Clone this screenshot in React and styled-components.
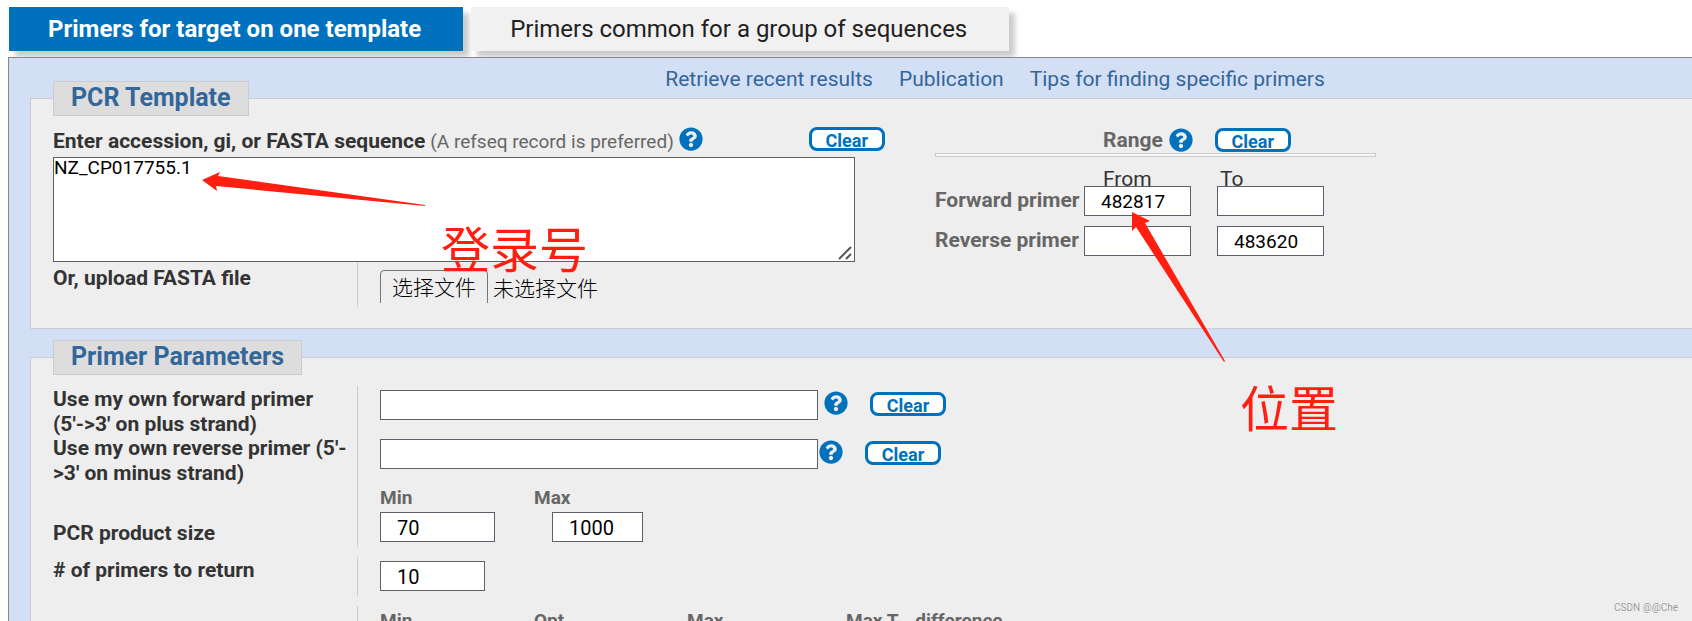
import React from 'react';
import styled, { createGlobalStyle, css } from 'styled-components';

const GlobalStyle = createGlobalStyle`
  * {
    box-sizing: border-box;
  }

  body {
    margin: 0;
    background: #fff;
    color: #333;
    font-family: Roboto, 'Noto Sans CJK SC', sans-serif;
    font-size: 21px;
    line-height: 25px;
  }
`;

const HelpIcon = () => (
  <svg width="24" height="24" viewBox="0 0 512 512" aria-hidden="true">
    <path
      fill="#0071bc"
      d="M504 256c0 137-111 248-248 248S8 393 8 256 119 8 256 8s248 111 248 248z"
    />
    <path
      fill="#eee"
      d="M262.7 90c-54.5 0-89.300 23-116.500 63.800-3.500 5.300-2.400 12.400 2.700 16.300l34.700 26.300c5.200 3.900 12.600 3 16.700-2.100 17.900-22.700 30.100-35.800 57.300-35.800 20.400 0 45.700 13.100 45.700 33 0 15-12.400 22.700-32.500 34C247.100 238.500 216 254.900 216 296v4c0 6.600 5.400 12 12 12h56c6.600 0 12-5.400 12-12v-1.300c0-28.500 83.200-29.600 83.200-106.700 0-58-60.200-102-116.500-102zM256 338c-25.400 0-46 20.600-46 46s20.600 46 46 46 46-20.600 46-46-20.600-46-46-46z"
    />
  </svg>
);

const Help = () => (
  <HelpButton type="button" aria-label="Help">
    <HelpIcon />
  </HelpButton>
);

// label column, divider, then the controls
const ParamRow = ({ label, htmlFor, rowHeight, labelTop, children }) => (
  <Row $height={rowHeight}>
    <RowLabel htmlFor={htmlFor} $top={labelTop}>{label}</RowLabel>
    <RowBody>{children}</RowBody>
  </Row>
);

const App = () => {
  return (
    <Page>
      <GlobalStyle />
      <Tabs>
        <Tab href="#one" $active>Primers for target on one template</Tab>
        <Tab href="#group">Primers common for a group of sequences</Tab>
      </Tabs>

      <Panel>
        <TopLinks>
          <a href="#recent">Retrieve recent results</a>
          <a href="#publication">Publication</a>
          <a href="#tips">Tips for finding specific primers</a>
        </TopLinks>

        <Section>
          <SectionTitle>PCR Template</SectionTitle>
          <TemplateGrid>
            <div>
              <SequenceHead>
                <label htmlFor="seq">Enter accession, gi, or FASTA sequence</label>
                <Hint>(A refseq record is preferred)</Hint>
                <Help />
                <ClearButton type="button">Clear</ClearButton>
              </SequenceHead>
              <SequenceBox>
                <textarea id="seq" defaultValue="NZ_CP017755.1" />
                <Grip width="14" height="14" viewBox="0 0 14 14" aria-hidden="true">
                  <path d="M1 13 13 1M8 13l5-5" />
                </Grip>
              </SequenceBox>
              <UploadRow>
                <UploadLabel htmlFor="upload">Or, upload FASTA file</UploadLabel>
                <UploadBody>
                  <FilePicker>
                    <input id="upload" type="file" />
                    <span>选择文件</span>
                    未选择文件
                  </FilePicker>
                </UploadBody>
              </UploadRow>
            </div>

            <Range>
              <RangeHead>
                <span>Range</span>
                <Help />
                <ClearButton type="button">Clear</ClearButton>
              </RangeHead>
              <RangeRule />
              <RangeCaptions>
                <span>From</span>
                <span>To</span>
              </RangeCaptions>
              <RangeRow>
                <span>Forward primer</span>
                <RangeInput aria-label="Forward primer from" defaultValue="482817" />
                <RangeInput aria-label="Forward primer to" />
              </RangeRow>
              <RangeRow>
                <span>Reverse primer</span>
                <RangeInput aria-label="Reverse primer from" />
                <RangeInput aria-label="Reverse primer to" defaultValue="483620" />
              </RangeRow>
            </Range>
          </TemplateGrid>
        </Section>

        <Section>
          <SectionTitle>Primer Parameters</SectionTitle>
          <Params>
            <ParamRow
              label={<>Use my own forward primer<br />(5'-&gt;3' on plus strand)</>}
              htmlFor="left"
              rowHeight={39}
            >
              <Controls $gap={6}>
                <TextInput id="left" $width={438} />
                <Help />
                <ClearButton type="button">Clear</ClearButton>
              </Controls>
            </ParamRow>
            <ParamRow
              label={<>Use my own reverse primer (5'-<br />&gt;3' on minus strand)</>}
              htmlFor="right"
              rowHeight={38}
            >
              <Controls $gap={1}>
                <TextInput id="right" $width={438} />
                <Help />
                <ClearButton type="button">Clear</ClearButton>
              </Controls>
            </ParamRow>
            <ParamRow label="PCR product size" htmlFor="sizeMin" rowHeight={64} labelTop={38}>
              <Captions>
                <label htmlFor="sizeMin">Min</label>
                <label htmlFor="sizeMax">Max</label>
              </Captions>
              <Sizes>
                <TextInput id="sizeMin" $width={115} defaultValue="70" />
                <TextInput id="sizeMax" $width={91} defaultValue="1000" />
              </Sizes>
            </ParamRow>
            <ParamRow label="# of primers to return" htmlFor="num" rowHeight={39}>
              <Controls>
                <TextInput id="num" $width={105} defaultValue="10" />
              </Controls>
            </ParamRow>
            <ParamRow label="" rowHeight={64}>
              <Captions>
                <span>Min</span>
                <span>Opt</span>
                <span>Max</span>
                <span>Max T<sub>m</sub> difference</span>
              </Captions>
            </ParamRow>
          </Params>
        </Section>
      </Panel>

      <Arrows width="1240" height="380" viewBox="0 0 1240 380" aria-hidden="true">
        <path d="M202 180 220 172 218 176 425 205 425 206 216 186 217 191Z" />
        <path d="M1132 212 1150 221 1145 223 1225 361 1224 362 1136 227 1132 231Z" />
      </Arrows>
      <Note $left={441} $top={217}>登录号</Note>
      <Note $left={1240} $top={376}>位置</Note>
      <Watermark>CSDN @@Che</Watermark>
    </Page>
  );
};

const Page = styled.div`
  position: relative;
  height: 100vh;
  padding: 7px 0 0 8px;
  overflow: hidden;
`;

const Tabs = styled.nav`
  display: flex;
  gap: 8px;
  padding-left: 1px;
  margin-bottom: 6px;
`;

const Tab = styled.a`
  height: 44px;
  padding: 0 42px 0 39px;
  font-size: 24px;
  line-height: 44px;
  text-decoration: none;
  white-space: nowrap;
  color: #212121;
  background: #f1f1f1;
  box-shadow: 6px 6px 5px #ccc;

  ${({ $active }) => $active && css`
    color: #fff;
    font-weight: bold;
    background: #0071bc;
  `}
`;

const Panel = styled.main`
  position: relative;
  min-height: 700px;
  padding-left: 21px;
  border: 1px solid #888;
  border-right: 0;
  background: #d3dff5;
`;

const TopLinks = styled.nav`
  display: flex;
  justify-content: center;
  gap: 26px;
  height: 40px;
  padding: 9px 32px 0 0;
  margin-left: 300px;

  a {
    color: #369;
    text-decoration: none;
    white-space: nowrap;
  }
`;

const Section = styled.section`
  height: 231px;
  padding-left: 22px;
  margin-bottom: 28px;
  border: 1px solid #ccc;
  border-right: 0;
  background: #eee;

  & + & {
    height: 400px;
  }
`;

const SectionTitle = styled.h2`
  width: max-content;
  height: 35px;
  margin: -18px 0 0;
  padding: 0 17px;
  border: 1px solid #ccc;
  background: #ddd;
  color: #369;
  font-size: 25px;
  line-height: 32px;
`;

const HelpButton = styled.button`
  display: flex;
  flex: none;
  padding: 0;
  border: 0;
  background: none;
`;

const ClearButton = styled.button`
  flex: none;
  width: 76px;
  height: 24px;
  padding: 0;
  border: 3px solid #0071bc;
  border-radius: 8px;
  background: #fff;
  color: #0071bc;
  font: bold 18px/22px Roboto, sans-serif;
`;

const TemplateGrid = styled.div`
  display: grid;
  grid-template-columns: 802px 441px;
  column-gap: 80px;
  padding-top: 11px;
`;

const Hint = styled.span`
  margin-left: 5px;
  color: #666;
  font-size: 19px;
  font-weight: normal;
`;

const SequenceHead = styled.div`
  display: flex;
  align-items: center;
  height: 30px;
  padding-bottom: 6px;
  font-weight: bold;
  white-space: nowrap;

  label,
  ${Hint} {
    padding-top: 4px;
  }

  ${HelpButton} {
    margin-left: 5px;
  }

  ${ClearButton} {
    margin-left: 106px;
  }
`;

const SequenceBox = styled.div`
  position: relative;

  textarea {
    display: block;
    width: 100%;
    height: 105px;
    padding: 0;
    border: 1px solid #5b616b;
    border-radius: 0;
    outline: 0;
    resize: none;
    background: #fff;
    color: #000;
    font: 19px/20px Roboto, sans-serif;
  }
`;

const Grip = styled.svg`
  position: absolute;
  right: 3px;
  bottom: 2px;
  fill: none;
  stroke: #555;
  stroke-width: 2;
  pointer-events: none;
`;

const UploadRow = styled.div`
  display: grid;
  grid-template-columns: 304px 1fr;
  height: 45px;
`;

const UploadLabel = styled.label`
  padding-top: 4px;
  font-weight: bold;
`;

const UploadBody = styled.div`
  padding: 8px 0 4px 22px;
  border-left: 1px solid #ccc;
`;

const FilePicker = styled.label`
  display: flex;
  height: 33px;
  gap: 5px;
  overflow: hidden;
  color: #000;
  font-weight: 300;
  line-height: 39px;

  input {
    position: absolute;
    width: 1px;
    height: 1px;
    opacity: 0;
  }

  span {
    height: 40px;
    padding: 0 11px;
    border: 1px solid #767676;
    border-radius: 4px;
    line-height: 35px;
  }
`;

const Range = styled.div`
  color: #666;
  font-weight: bold;
`;

const RangeHead = styled.div`
  display: flex;
  align-items: center;
  height: 26px;
  padding-left: 168px;

  ${HelpButton} {
    margin: 0 22px 0 6px;
  }
`;

const RangeRule = styled.div`
  height: 4px;
  border: 1px solid #ccc;
  background: #f5f5f5;
`;

const RangeCaptions = styled.div`
  display: grid;
  grid-template-columns: 117px 1fr;
  height: 29px;
  padding: 10px 0 0 168px;
  color: #333;
  font-weight: normal;
  line-height: 24px;
`;

const TextInput = styled.input`
  width: ${({ $width }) => $width}px;
  height: 30px;
  padding: 2px 16px 0;
  border: 1px solid #5b616b;
  border-radius: 0;
  outline: 0;
  background: #fff;
  color: #000;
  font: 20px/25px Roboto, sans-serif;
`;

const RangeInput = styled(TextInput).attrs({ $width: 107 })`
  padding-top: 0;
  font-size: 19px;
`;

const RangeRow = styled.div`
  position: relative;
  display: grid;
  grid-template-columns: 149px 133px 107px;
  height: 30px;
  margin-bottom: 10px;
  line-height: 28px;
`;

const Params = styled.div`
  display: flex;
  flex-direction: column;
  gap: 10px;
  padding-top: 11px;
`;

const Row = styled.div`
  display: grid;
  grid-template-columns: 304px 1fr;
  height: ${({ $height }) => $height}px;
`;

const RowLabel = styled.label`
  padding-top: ${({ $top = 1 }) => $top}px;
  font-weight: bold;
  white-space: nowrap;
`;

const RowBody = styled.div`
  padding: 4px 0 0 22px;
  border-left: 1px solid #ccc;
`;

const Controls = styled.div`
  display: flex;

  ${ClearButton} {
    margin: 2px 0 0 22px;
  }

  ${HelpButton} {
    height: 24px;
    margin: 1px 0 0 ${({ $gap }) => $gap}px;
  }
`;

const Captions = styled.div`
  display: grid;
  grid-template-columns: 154px 153px 159px auto;
  justify-content: start;
  height: 25px;
  color: #666;
  font-size: 19px;
  font-weight: bold;
  line-height: 21px;

  sub {
    font-size: 14px;
    line-height: 0;
  }
`;

const Sizes = styled.div`
  display: flex;
  gap: 57px;
`;

const Arrows = styled.svg`
  position: absolute;
  top: 0;
  left: 0;
  fill: #ff1e10;
  pointer-events: none;
`;

const Note = styled.div`
  position: absolute;
  top: ${({ $top }) => $top}px;
  left: ${({ $left }) => $left}px;
  color: #ff1e10;
  font-size: 49px;
  line-height: 70px;
  pointer-events: none;
`;

const Watermark = styled.div`
  position: absolute;
  right: 14px;
  bottom: 5px;
  color: #999;
  font-size: 10px;
  line-height: 16px;
  text-shadow: 0 0 1px #fff;
`;

export default App;
